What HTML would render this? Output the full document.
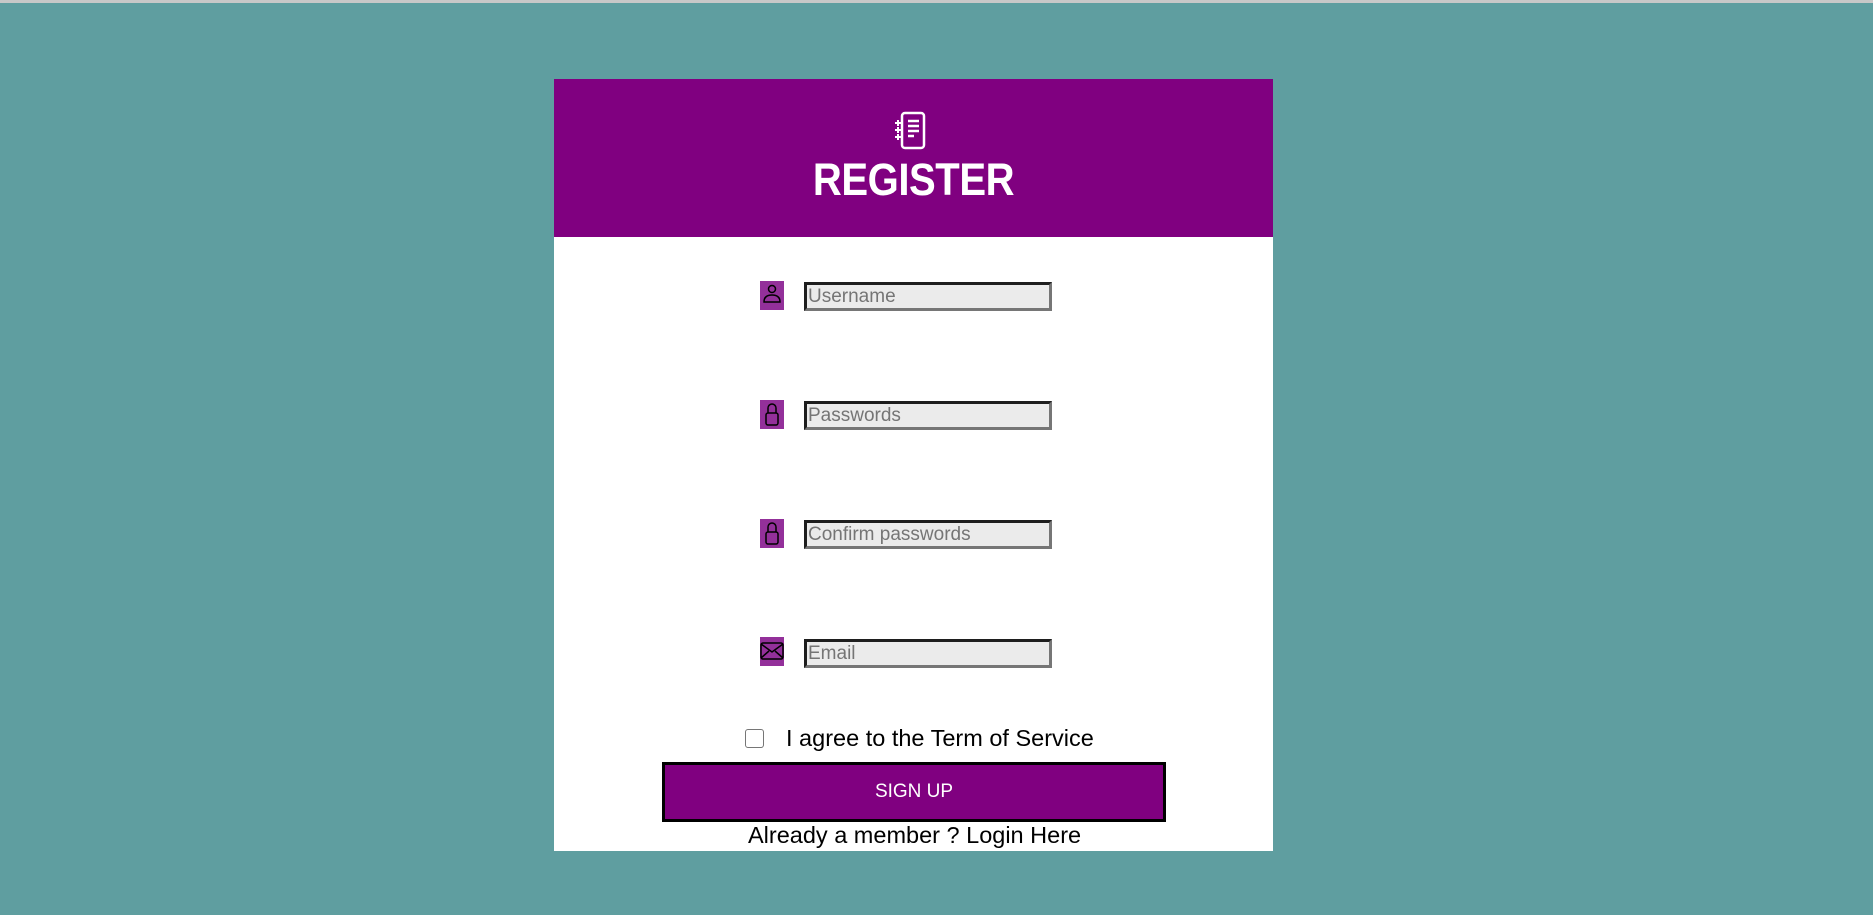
<!DOCTYPE html>
<html><head><meta charset="utf-8"><style>
*{margin:0;padding:0;box-sizing:border-box}
body{width:1873px;height:915px;background:#5f9ea0;position:relative;overflow:hidden;font-family:"Liberation Sans",Arial,sans-serif}
.top{position:absolute;left:0;top:0;width:1873px;height:3px;background:#c8c8c8}
.card{position:absolute;left:554px;top:79px;width:719px;height:772px;background:#fff}
.head{position:absolute;left:554px;top:79px;width:719px;height:158px;background:#800080}
.title{position:absolute;left:554px;width:719px;top:154px;text-align:center;color:#fff;font-weight:bold;font-size:45px;letter-spacing:-0.5px;transform:scaleX(0.89)}
.ic{position:absolute;left:760px;width:24px;height:29px;background:#93309a}
.in{position:absolute;left:804px;width:248px;height:29px;background:#ebebeb;border:3px solid;border-color:#1e1e1e #767676 #767676 #1e1e1e;color:#757575;font-size:19px;line-height:23px;padding-left:1px}
.t{position:absolute;color:#000;font-size:23.5px;white-space:nowrap}
.cb{position:absolute;left:745px;top:729px;width:19px;height:19px;border:1.5px solid #767676;border-radius:3px;background:#fff}
.btn{position:absolute;left:662px;top:762px;width:504px;height:60px;background:#800080;border:3px solid #000;color:#fff;font-size:19px;text-align:center;line-height:54px}
</style></head><body>
<div class="top"></div>
<div class="card"></div>
<div class="head"></div>
<svg style="position:absolute;left:893px;top:110px" width="40" height="42" viewBox="0 0 40 42" fill="none" stroke="#fff" stroke-width="2.5">
<rect x="9" y="3" width="22" height="35" rx="3"/>
<path d="M15 11h11M15 16h11M15 21h11M15 26h6"/>
<path d="M2 13h6M5 10v6M2 20h6M5 17v6M2 27h6M5 24v6" stroke-width="2"/>
</svg>
<div class="title">REGISTER</div>

<div class="ic" style="top:281px"><svg width="24" height="29" viewBox="0 0 24 29" fill="none" stroke="#000" stroke-width="1.5"><circle cx="12" cy="8" r="3.5"/><path d="M4 21c0-5 3-7 8-7s8 2 8 7z"/></svg></div>
<div class="in" style="top:282px">Username</div>

<div class="ic" style="top:400px"><svg width="24" height="29" viewBox="0 0 24 29" fill="none" stroke="#000" stroke-width="1.5"><path d="M8 13V8a4 4 0 0 1 8 0v5"/><rect x="6" y="13" width="12" height="12" rx="2"/></svg></div>
<div class="in" style="top:401px">Passwords</div>

<div class="ic" style="top:519px"><svg width="24" height="29" viewBox="0 0 24 29" fill="none" stroke="#000" stroke-width="1.5"><path d="M8 13V8a4 4 0 0 1 8 0v5"/><rect x="6" y="13" width="12" height="12" rx="2"/></svg></div>
<div class="in" style="top:520px">Confirm passwords</div>

<div class="ic" style="top:637px"><svg width="24" height="29" viewBox="0 0 24 29" fill="none" stroke="#000" stroke-width="1.5"><rect x="1" y="6" width="22" height="16" rx="2"/><path d="M1 7l11 8 11-8M1 21l8-7M23 21l-8-7"/></svg></div>
<div class="in" style="top:639px">Email</div>

<div class="cb"></div>
<div class="t" style="left:786px;top:725px">I agree to the Term of Service</div>
<div class="btn">SIGN UP</div>
<div class="t" style="left:748px;top:822px">Already a member ? Login Here</div>
</body></html>
